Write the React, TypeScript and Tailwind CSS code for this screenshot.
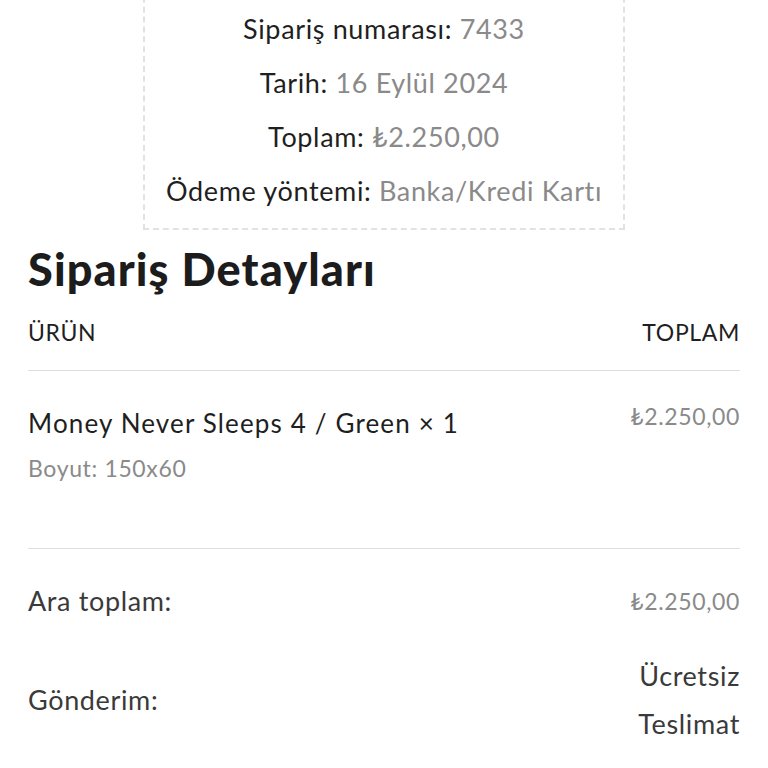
export default function App() {
  const font = { fontFamily: '"Lato", "Noto Sans", sans-serif' };
  return (
    <div className="w-[768px] h-[768px] overflow-hidden bg-white text-[#1f1f1f] tracking-[0.04em]" style={font}>
      <div className="mx-auto -mt-[13px] w-[482px] border-2 border-dashed border-[#e2e2e2] pt-[13px] pb-[10px] text-center text-[27px] leading-[54px]">
        <div>
          Sipariş numarası: <span className="text-[#8a8a8a]">7433</span>
        </div>
        <div>
          Tarih: <span className="text-[#8a8a8a]">16 Eylül 2024</span>
        </div>
        <div>
          Toplam: <span className="text-[#8a8a8a]">₺2.250,00</span>
        </div>
        <div>
          Ödeme yöntemi: <span className="text-[#8a8a8a]">Banka/Kredi Kartı</span>
        </div>
      </div>

      <div className="px-[28px]">
        <h2 className="mt-[17px] text-[45px] leading-[45px] font-black tracking-[0.025em] text-[#1c1c1c]">Sipariş Detayları</h2>

        <div className="mt-[25px] flex justify-between border-b border-[#dedede] pb-[23px] text-[23px] leading-[30px]">
          <span>ÜRÜN</span>
          <span>TOPLAM</span>
        </div>

        <div className="flex items-start justify-between border-b border-[#dedede] pt-[31px] pb-[66px]">
          <div>
            <div className="text-[26px] leading-[42px] tracking-[0.044em]">Money Never Sleeps 4 / Green × 1</div>
            <div className="mt-[10px] text-[23px] leading-[28px] text-[#8a8a8a]">Boyut: 150x60</div>
          </div>
          <div className="text-[23px] leading-[28px] text-[#8a8a8a]">₺2.250,00</div>
        </div>

        <div className="flex items-center justify-between pt-[36px]">
          <span className="text-[27px] leading-[32px] text-[#3a3a3a]">Ara toplam:</span>
          <span className="text-[23px] leading-[32px] text-[#8a8a8a]">₺2.250,00</span>
        </div>

        <div className="mt-[35px] flex items-center justify-between">
          <span className="text-[27px] leading-[32px] text-[#3a3a3a]">Gönderim:</span>
          <div className="text-right text-[27px] leading-[48px] text-[#3a3a3a]">
            <div>Ücretsiz</div>
            <div>Teslimat</div>
          </div>
        </div>
      </div>
    </div>
  );
}
